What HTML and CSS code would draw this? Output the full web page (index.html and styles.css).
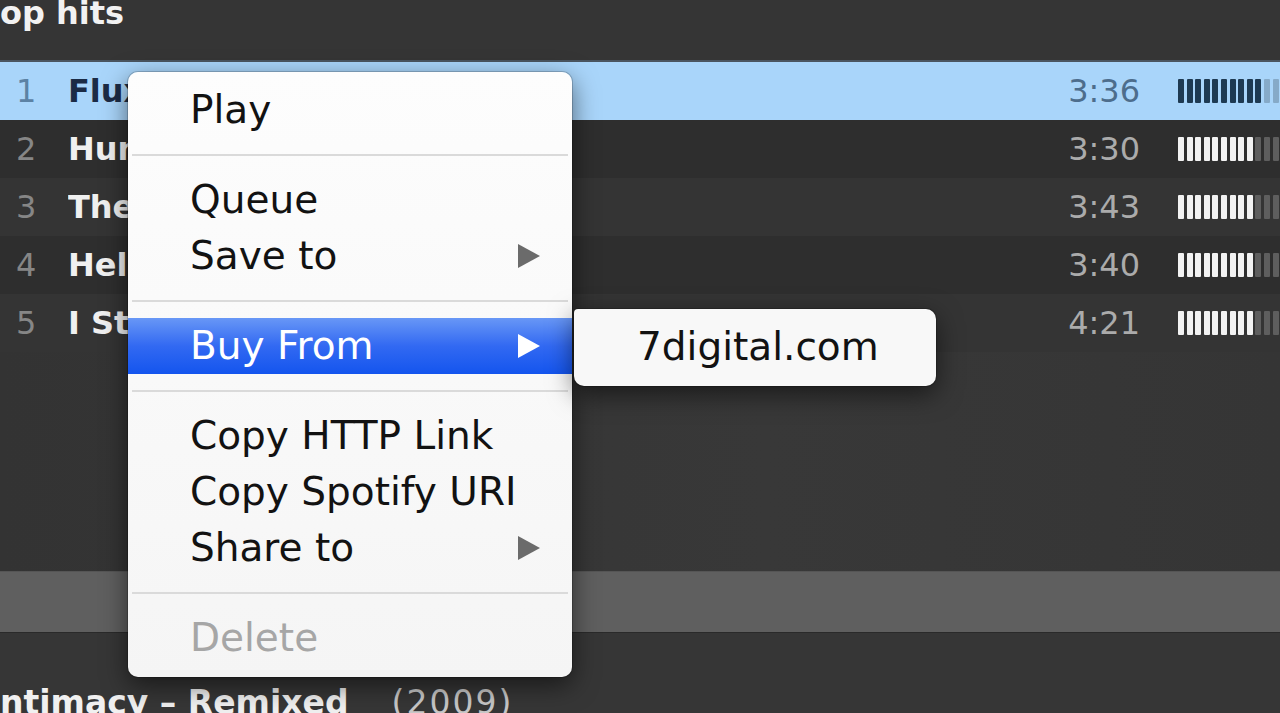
FILE: index.html
```html
<!DOCTYPE html>
<html lang="en">
<head>
<meta charset="utf-8">
<title>Top hits</title>
<link rel="stylesheet" href="styles.css">
</head>
<body>
<div class="app">
  <header class="header"><h1 class="title">op hits</h1></header>
  <ol class="tracks">
    <li class="track selected"><span class="num">1</span><span class="name">Flux</span><span class="dur">3:36</span><span class="pop"><i class="on"></i><i class="on"></i><i class="on"></i><i class="on"></i><i class="on"></i><i class="on"></i><i class="on"></i><i class="on"></i><i class="on"></i><i class="on"></i><i></i><i></i><i></i></span></li>
    <li class="track"><span class="num">2</span><span class="name">Hunting for Witches</span><span class="dur">3:30</span><span class="pop"><i class="on"></i><i class="on"></i><i class="on"></i><i class="on"></i><i class="on"></i><i class="on"></i><i class="on"></i><i class="on"></i><i class="on"></i><i></i><i></i><i></i><i></i></span></li>
    <li class="track"><span class="num">3</span><span class="name">The Prayer</span><span class="dur">3:43</span><span class="pop"><i class="on"></i><i class="on"></i><i class="on"></i><i class="on"></i><i class="on"></i><i class="on"></i><i class="on"></i><i class="on"></i><i class="on"></i><i></i><i></i><i></i><i></i></span></li>
    <li class="track"><span class="num">4</span><span class="name">Helicopter</span><span class="dur">3:40</span><span class="pop"><i class="on"></i><i class="on"></i><i class="on"></i><i class="on"></i><i class="on"></i><i class="on"></i><i class="on"></i><i class="on"></i><i class="on"></i><i></i><i></i><i></i><i></i></span></li>
    <li class="track"><span class="num">5</span><span class="name">I Still Remember</span><span class="dur">4:21</span><span class="pop"><i class="on"></i><i class="on"></i><i class="on"></i><i class="on"></i><i class="on"></i><i class="on"></i><i class="on"></i><i class="on"></i><i class="on"></i><i></i><i></i><i></i><i></i></span></li>
  </ol>
  <div class="empty"></div>
  <div class="band"></div>
  <div class="album"><span class="album-name">ntimacy – Remixed</span><span class="album-year">(2009)</span></div>

  <div class="menu">
    <div class="item"><span class="label">Play</span></div>
    <div class="sep"></div>
    <div class="item"><span class="label">Queue</span></div>
    <div class="item"><span class="label">Save to</span><span class="arrow"></span></div>
    <div class="sep"></div>
    <div class="item active"><span class="label">Buy From</span><span class="arrow"></span></div>
    <div class="sep"></div>
    <div class="item"><span class="label">Copy HTTP Link</span></div>
    <div class="item"><span class="label">Copy Spotify URI</span></div>
    <div class="item"><span class="label">Share to</span><span class="arrow"></span></div>
    <div class="sep"></div>
    <div class="item disabled"><span class="label">Delete</span></div>
  </div>
  <div class="submenu">
    <div class="item sub"><span class="label">7digital.com</span></div>
  </div>
</div>
</body>
</html>
```
FILE: styles.css
```css
body {
  margin: 0;
  background: #363636;
  font-family: "DejaVu Sans", "Liberation Sans", sans-serif;
  overflow: hidden;
}

.app {
  position: relative;
  height: 713px;
  overflow: hidden;
}

.header {
  height: 60px;
  background: #353535;
  border-bottom: 2px solid #4a5560;
  display: flex;
  align-items: flex-start;
}

.title {
  margin: -3px 0 0 0;
  font-size: 32px;
  line-height: 33px;
  font-weight: bold;
  color: #f2f2f2;
}

.tracks {
  list-style: none;
  margin: 0;
  padding: 0;
}

.track {
  display: flex;
  align-items: center;
  height: 58px;
  background: #2e2e2e;
  font-size: 32px;
}

.track:nth-child(odd) {
  background: #343434;
}

.track.selected {
  background: #a9d5fa;
}

.num {
  width: 52px;
  padding-left: 16px;
  color: #868686;
  flex-shrink: 0;
}

.name {
  flex: 1;
  font-weight: bold;
  color: #f0f0f0;
  white-space: nowrap;
  overflow: hidden;
}

.dur {
  margin-right: 38px;
  color: #ababab;
}

.selected .num { color: #5c82a4; }
.selected .name { color: #1b2b45; }
.selected .dur { color: #4d6d8c; }

.pop {
  display: flex;
  gap: 2.6px;
  width: 102px;
  flex-shrink: 0;
  overflow: hidden;
}

.pop i {
  flex-shrink: 0;
  width: 6px;
  height: 24px;
  border-radius: 1px;
  background: #5e5e5e;
}

.pop i.on {
  background: #f2f2f2;
}

.selected .pop i {
  background: #86aac8;
}

.selected .pop i.on {
  background: #1e3a52;
}

.empty {
  height: 219px;
  background: linear-gradient(90deg, #333 0%, #383838 60%, #353535 100%);
}

.band {
  height: 60px;
  background: #5f5f5f;
  border-top: 1px solid #555;
  border-bottom: 1px solid #2a2a2a;
}

.album {
  padding-top: 54px;
  font-size: 33px;
  line-height: 32px;
  white-space: nowrap;
}

.album-name {
  font-weight: bold;
  color: #f0f0f0;
}

.album-year {
  margin-left: 43px;
  color: #c8c8c8;
  letter-spacing: 2px;
}

/* Context menu */
.menu {
  position: absolute;
  left: 128px;
  top: 72px;
  width: 444px;
  padding: 10px 0 11px;
  background: linear-gradient(#fdfdfd, #f5f5f5);
  border-radius: 10px;
  box-shadow: 0 8px 26px rgba(0, 0, 0, 0.55), 0 0 0 1px rgba(0, 0, 0, 0.18);
  font-size: 39px;
  color: #121212;
}

.item {
  display: flex;
  align-items: center;
  height: 56px;
  line-height: 56px;
  padding: 0 32px 0 62px;
  white-space: nowrap;
}

.label {
  flex: 1;
}

.arrow {
  width: 0;
  height: 0;
  border-left: 22px solid #6b6b6b;
  border-top: 12px solid transparent;
  border-bottom: 12px solid transparent;
}

.item.active {
  background: linear-gradient(#6897f6, #3269f2 50%, #1455ee);
  color: #fff;
}

.item.active .arrow {
  border-left-color: #fff;
}

.item.disabled {
  color: #a6a6a6;
}

.sep {
  height: 34px;
  display: flex;
  align-items: center;
}

.sep::before {
  content: "";
  flex: 1;
  height: 2px;
  margin: 0 4px;
  background: #dadada;
}

.submenu {
  position: absolute;
  left: 574px;
  top: 309px;
  width: 362px;
  padding: 10px 0 11px;
  background: #f8f8f8;
  border-radius: 4px 10px 10px 10px;
  box-shadow: 0 8px 26px rgba(0, 0, 0, 0.55), 0 0 0 1px rgba(0, 0, 0, 0.18);
  font-size: 39px;
  color: #121212;
}

.item.sub {
  padding-left: 63px;
}
```
